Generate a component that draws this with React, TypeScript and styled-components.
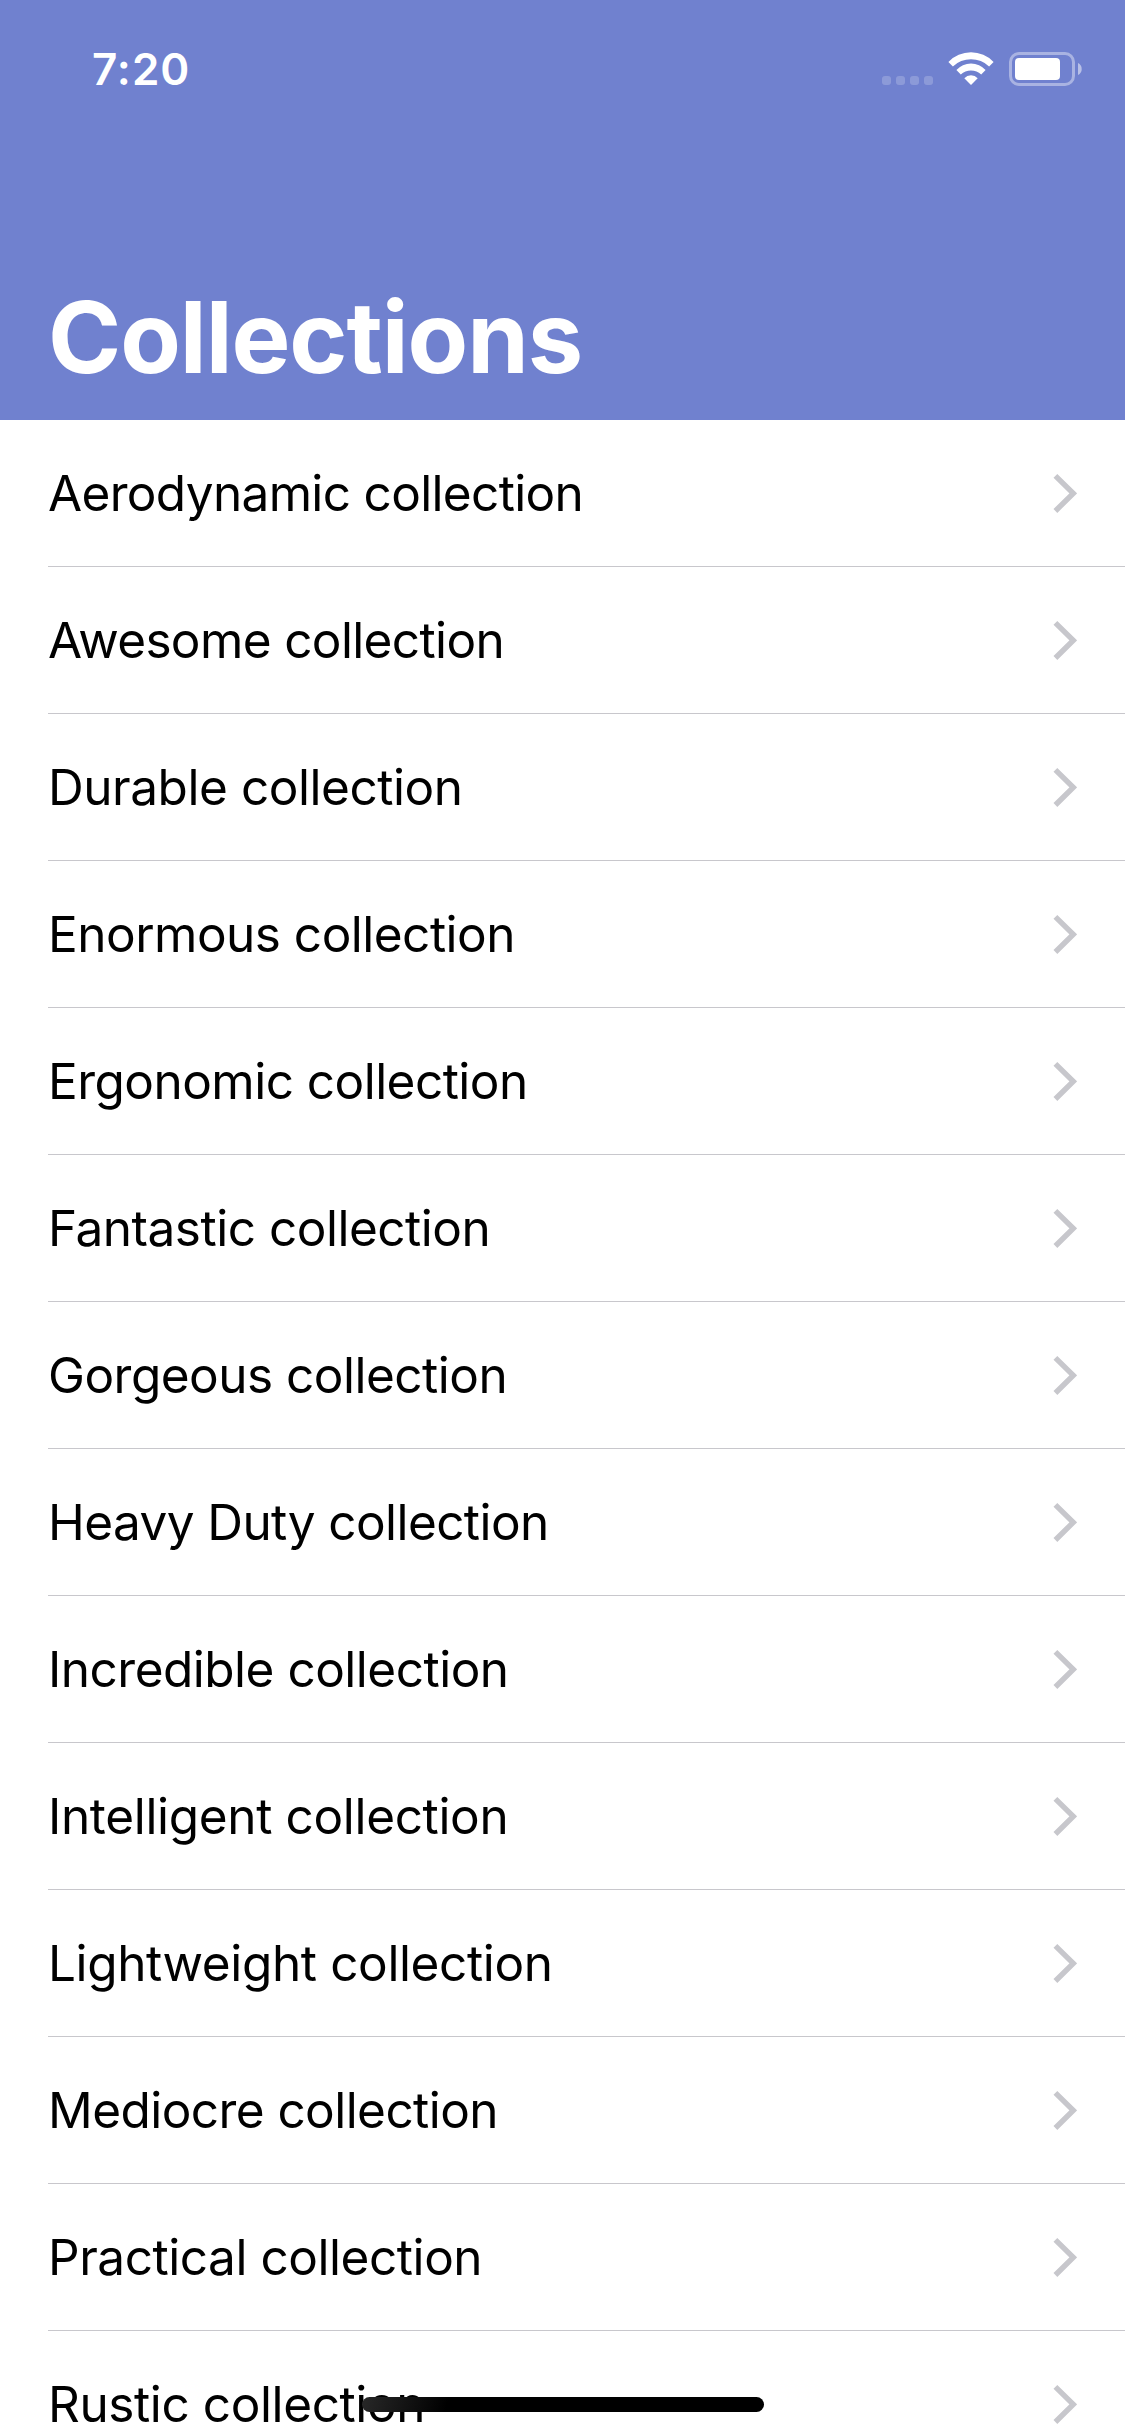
import React from "react";
import styled, { createGlobalStyle } from "styled-components";

const GlobalStyle = createGlobalStyle`
  * { box-sizing: border-box; }
  body { margin: 0; background: #fff; }
`;

const Screen = styled.main`
  position: relative;
  width: 1125px;
  height: 2436px;
  overflow: hidden;
  background: #fff;
  color: #000;
  font-family: Inter, "Liberation Sans", sans-serif;
`;

const Header = styled.header`
  display: flex;
  flex-direction: column;
  justify-content: space-between;
  height: 420px;
  background: #7081cf;
  color: #fff;
`;

const StatusBar = styled.div`
  display: flex;
  justify-content: space-between;
  align-items: center;
  height: 138px;
  padding: 0 43px 0 92px;
`;

const Clock = styled.time`
  font-size: 44px;
  font-weight: 560;
  line-height: 52px;
  letter-spacing: 1px;
`;

const StatusIcons = styled.svg`
  display: block;
`;

const Title = styled.h1`
  margin: 0;
  padding: 0 48px 23px;
  font-size: 99px;
  font-weight: 700;
  line-height: 120px;
  letter-spacing: -1.05px;
`;

const List = styled.ul`
  margin: 0;
  padding: 0 0 0 48px;
  list-style: none;
`;

const Row = styled.li`
  display: flex;
  align-items: center;
  justify-content: space-between;
  height: 147px;
  padding-right: 48px;
  border-bottom: 1px solid #c8c7cc;
`;

const Label = styled.span<{ $tracking: number }>`
  font-size: 49.5px;
  line-height: 60px;
  letter-spacing: ${({ $tracking }) => $tracking}px;
  white-space: nowrap;
`;

const Chevron = styled.svg`
  display: block;
  flex: none;
`;

const HomeIndicator = styled.div`
  position: absolute;
  left: 362px;
  bottom: 24px;
  width: 402px;
  height: 15px;
  border-radius: 7.5px;
  background: linear-gradient(105deg, #282828 0, #000 84px);
`;

const collections = [
  { name: "Aerodynamic", tracking: -0.66 },
  { name: "Awesome", tracking: -0.63 },
  { name: "Durable", tracking: -0.45 },
  { name: "Enormous", tracking: -0.51 },
  { name: "Ergonomic", tracking: -0.53 },
  { name: "Fantastic", tracking: -0.49 },
  { name: "Gorgeous", tracking: -0.51 },
  { name: "Heavy Duty", tracking: -0.58 },
  { name: "Incredible", tracking: -0.5 },
  { name: "Intelligent", tracking: -0.34 },
  { name: "Lightweight", tracking: -0.38 },
  { name: "Mediocre", tracking: -0.56 },
  { name: "Practical", tracking: -0.45 },
  { name: "Rustic", tracking: -0.4 },
];

export default function App() {
  return (
    <Screen>
      <GlobalStyle />
      <Header>
        <StatusBar>
          <Clock>7:20</Clock>
          <StatusIcons width="200" height="34" viewBox="882 52 200 34" fill="#fff">
            {[882, 896, 910, 924].map((x) => (
              <rect key={x} x={x} y="76" width="9" height="9" rx="3" opacity="0.2" />
            ))}
            <path d="M948.4 62a31.3 31.3 0 0 1 45.2 0l-4.5 4.5a26 26 0 0 0-36.2 0z" />
            <path d="M956.4 70.1a19.4 19.4 0 0 1 29.2 0l-4.4 4.4a14.8 14.8 0 0 0-20.4 0z" />
            <path d="M964.3 78.3a9.1 9.1 0 0 1 13.4 0L971 85z" />
            <rect x="1010.5" y="53.5" width="63" height="31" rx="8.5" fill="none" stroke="#fff" strokeWidth="3" opacity="0.4" />
            <rect x="1015" y="58" width="45" height="22" rx="4" />
            <path d="M1078 63a6.7 6.7 0 0 1 0 12z" opacity="0.5" />
          </StatusIcons>
        </StatusBar>
        <Title>Collections</Title>
      </Header>
      <List>
        {collections.map(({ name, tracking }) => (
          <Row key={name}>
            <Label $tracking={tracking}>{name} collection</Label>
            <Chevron width="24" height="40" viewBox="0 0 24 40" fill="none" stroke="#c7c7cc" strokeWidth="5.4">
              <path d="M2.4 2.8 20.2 20.4 2.4 38" />
            </Chevron>
          </Row>
        ))}
      </List>
      <HomeIndicator />
    </Screen>
  );
}
